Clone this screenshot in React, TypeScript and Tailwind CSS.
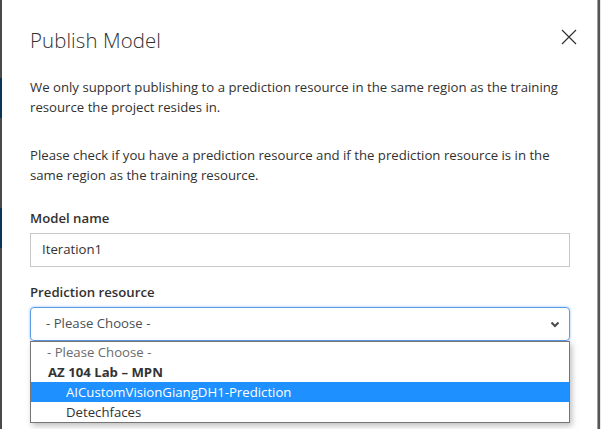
import React from 'react';

const font = { fontFamily: '"Open Sans", "Noto Sans", sans-serif' };

function CloseIcon() {
  return (
    <svg width="16" height="16" viewBox="0 0 16 16" className="text-[#323130]">
      <path d="M1 1 L15 15 M15 1 L1 15" stroke="currentColor" strokeWidth="1.2" fill="none" />
    </svg>
  );
}

function Chevron() {
  return (
    <svg width="10" height="7" viewBox="0 0 10 7">
      <path d="M1.5 1.5 L5 5 L8.5 1.5" stroke="#4a4a4a" strokeWidth="2" fill="none" />
    </svg>
  );
}

export default function App() {
  return (
    <div className="flex h-[429px] w-[601px] overflow-hidden bg-white text-[#323130]" style={font}>
      {/* left page edge behind the dialog */}
      <div className="flex w-[2px] flex-col bg-[#4a4a4a]">
        <div className="mt-[78px] h-[40px] bg-[#0b3556]" />
        <div className="mt-[90px] h-[40px] bg-[#0b3556]" />
      </div>

      <div className="relative flex-1 pl-[28px] pr-[27px]">
        <header className="flex items-start justify-between pt-[26px]">
          <h1 className="text-[20.4px] font-light leading-[28px] tracking-[0.1px]">Publish Model</h1>
          <button className="mt-[3px] mr-[-7px]">
            <CloseIcon />
          </button>
        </header>

        <p className="mt-[23px] text-[13.2px] leading-[20px]">
          We only support publishing to a prediction resource in the same region as the training resource the project resides in.
        </p>
        <p className="mt-[28px] text-[13.2px] leading-[20px]">
          Please check if you have a prediction resource and if the prediction resource is in the same region as the training resource.
        </p>

        <label className="mt-[23px] block text-[13.2px] font-semibold leading-[20px]">Model name</label>
        <div className="mt-[5px] flex h-[34px] items-center border border-[#c8c8c8] px-[11px] text-[13.2px]">
          Iteration1
        </div>

        <label className="mt-[15px] block text-[13.2px] font-semibold leading-[20px]">Prediction resource</label>
        <div className="relative mt-[5px]">
          <div className="flex h-[34px] items-center justify-between rounded-[4px] border border-[#5a9be6] pl-[15px] pr-[9px] text-[13.2px] text-[#495057] shadow-[0_0_3px_rgba(80,150,230,0.6)]">
            <span>- Please Choose -</span>
            <Chevron />
          </div>

          {/* open dropdown list */}
          <ul className="absolute left-0 right-0 top-[34px] border border-[#767676] bg-white text-[13.2px] leading-[20px] shadow-[2px_3px_6px_rgba(0,0,0,0.25)]">
            <li className="pl-[16px] text-[#6a6a6a]">- Please Choose -</li>
            <li className="pl-[17px] font-bold text-[#333]">AZ 104 Lab – MPN</li>
            <li className="bg-[#1e90ff] pl-[35px] text-white">AICustomVisionGiangDH1-Prediction</li>
            <li className="pl-[35px] text-[#333]">Detechfaces</li>
          </ul>
        </div>
      </div>

      {/* right page edge */}
      <div className="w-[1px] bg-[#a0a0a0]" />
      <div className="w-[2px] bg-[#555]" />
      <div className="w-[1px] bg-[#e6e6e6]" />
    </div>
  );
}
